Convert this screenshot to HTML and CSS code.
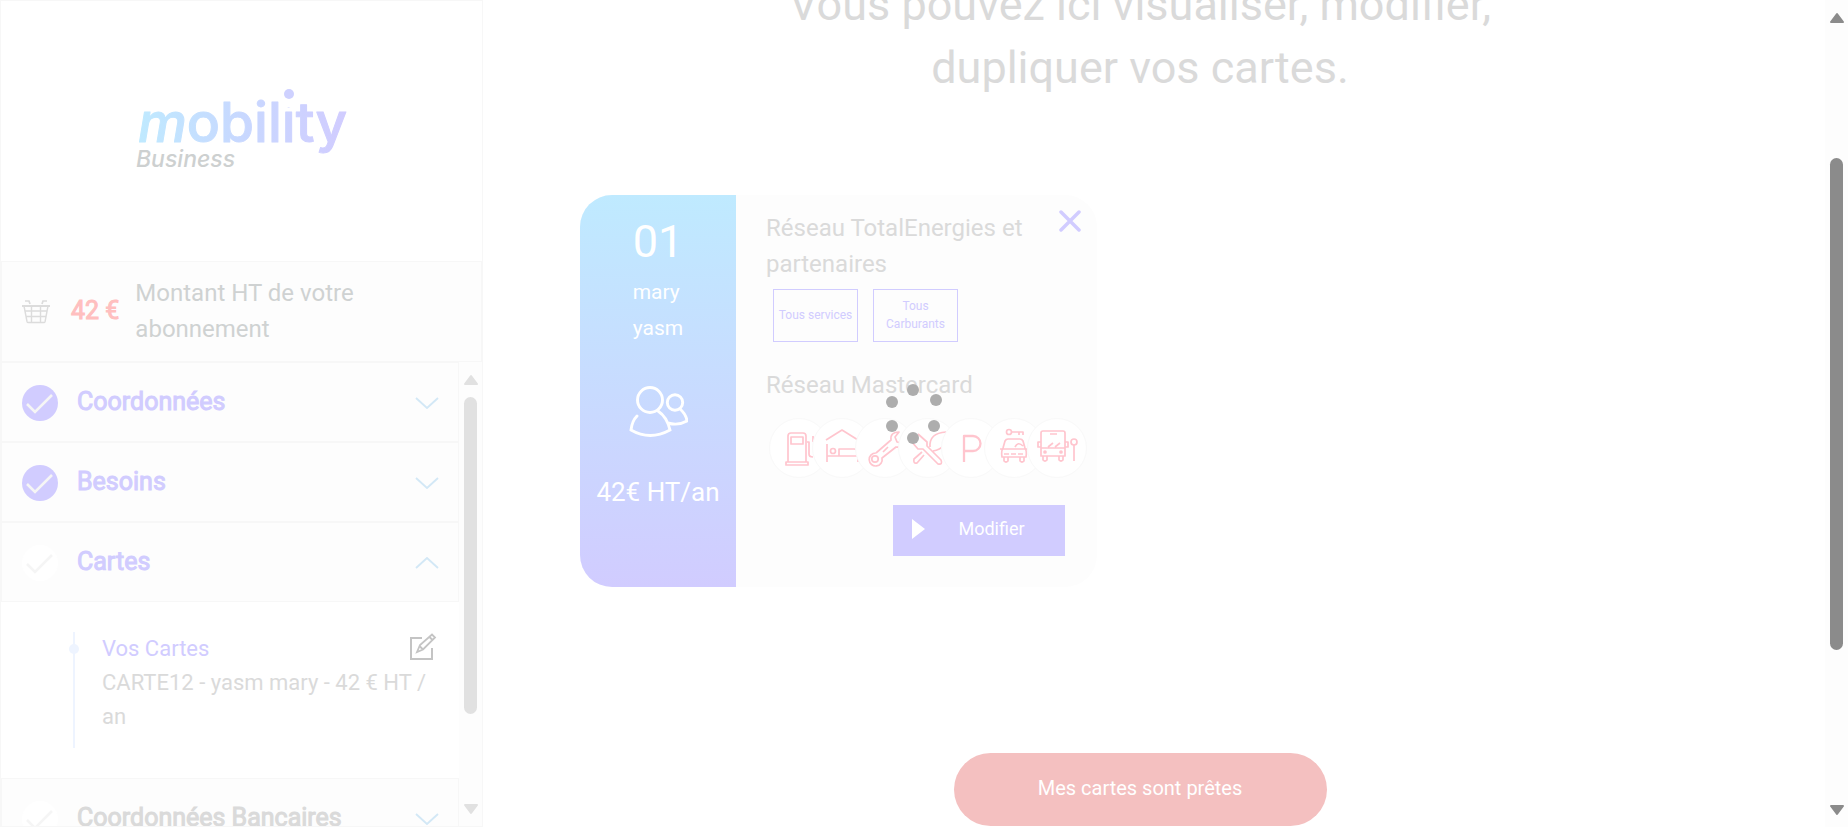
FILE: index.html
```html
<!DOCTYPE html>
<html lang="fr">
<head>
<meta charset="utf-8">
<title>Mobility Business</title>
<link rel="stylesheet" href="styles.css">
</head>
<body>
<svg class="defs" aria-hidden="true">
  <defs>
    <symbol id="check" viewBox="0 0 36 36"><path d="M5 19l8 8L30 10" fill="none" stroke="#f5f5f5" stroke-width="2.6"/></symbol>
    <symbol id="chevron" viewBox="0 0 24 12"><path d="M1 1l11 10L23 1" fill="none" stroke="#d3e8f6" stroke-width="1.9"/></symbol>
    <symbol id="arrow" viewBox="0 0 16 12"><path d="M8 2L14 10H2z" fill="currentColor" stroke="currentColor" stroke-width="2" stroke-linejoin="round"/></symbol>
  </defs>
</svg>
<div class="app">
  <aside class="sidebar">
    <div class="brand">
      <svg class="logo" viewBox="0 0 212 84" role="img" aria-label="mobility Business">
        <defs><linearGradient id="lg" gradientUnits="userSpaceOnUse" x1="0" y1="50" x2="212" y2="50"><stop offset="0" stop-color="#bfeaff"/><stop offset=".5" stop-color="#c8d8ff"/><stop offset="1" stop-color="#d1ccff"/></linearGradient></defs>
        <text class="logo-word" x="2" y="53"><tspan class="slant">m</tspan>obility</text>
        <rect x="147" y="5" width="10" height="13" fill="#fff"/>
        <circle cx="153" cy="5" r="5" fill="#ced1ff"/>
        <text class="logo-sub" x="0" y="78">Business</text>
      </svg>
    </div>
    <div class="summary">
      <svg class="basket" viewBox="0 0 28 26" fill="none" stroke="#dcdcdc"><path d="M3 3h4l1 3M25 3h-4l-1 3" stroke-width="1.7"/><path d="M0 8h28" stroke-width="2"/><path d="M2 8l3 15.500q.3 1 1.300 1h15.500q1 0 1.300-1L26 8M9.500 8v16M18.500 8v16M3 13h22M4 18.500h20" stroke-width="1.4"/></svg>
      <strong class="price">42 €</strong>
      <span class="summary-label">Montant HT de votre abonnement</span>
    </div>
    <div class="steps-area">
      <nav class="steps">
        <button class="step"><svg class="tick done"><use href="#check"/></svg><span class="step-name">Coordonnées</span><svg class="chev"><use href="#chevron"/></svg></button>
        <button class="step"><svg class="tick done"><use href="#check"/></svg><span class="step-name">Besoins</span><svg class="chev"><use href="#chevron"/></svg></button>
        <button class="step" aria-expanded="true"><svg class="tick"><use href="#check"/></svg><span class="step-name">Cartes</span><svg class="chev up"><use href="#chevron"/></svg></button>
        <div class="detail">
          <div class="timeline"></div>
          <div class="detail-text"><a class="detail-link" href="#cartes">Vos Cartes</a><p class="detail-line">CARTE12 - yasm mary - 42 € HT / an</p></div>
          <button class="edit" aria-label="Modifier vos cartes"><svg viewBox="0 0 28 28" fill="none" stroke="#c4c4c4" stroke-width="2"><path d="M13 5H2v21h21V15"/><path d="M8 19l3-7L23 1.500l3 3L14 16.500zM10.500 13l3 3M20.500 4l3 3" stroke-width="1.8"/></svg></button>
        </div>
        <button class="step"><svg class="tick"><use href="#check"/></svg><span class="step-name todo">Coordonnées Bancaires</span><svg class="chev"><use href="#chevron"/></svg></button>
      </nav>
      <div class="scroll inner"><svg class="arrow"><use href="#arrow"/></svg><div class="track"><div class="thumb"></div></div><svg class="arrow down"><use href="#arrow"/></svg></div>
    </div>
  </aside>
  <main class="main">
    <h1 class="title">Vous pouvez ici visualiser, modifier,<br>dupliquer vos cartes.</h1>
    <article class="card" id="cartes">
      <div class="card-side">
        <div class="who"><div class="num">01</div><div>mary</div><div>yasm</div></div>
        <svg class="people" viewBox="0 0 60 52" fill="none" stroke="#fff" stroke-width="2.900" stroke-linecap="round"><circle cx="22" cy="14" r="12.500"/><circle cx="47" cy="16.500" r="7.700"/><path d="M9 30Q4 35 3 44Q22 55 42 44Q39 31 30 25M52 23Q58 28 59 35Q50 40 40 37"/></svg>
        <div class="cost">42€ HT/an</div>
      </div>
      <div class="card-body">
        <button class="close" aria-label="Supprimer"><svg viewBox="0 0 22 22"><path d="M2 2l18 18M20 2L2 20" stroke="#d1ccff" stroke-width="3.500" stroke-linecap="round"/></svg></button>
        <h2 class="net">Réseau TotalEnergies et partenaires</h2>
        <div class="tags"><span class="tag">Tous services</span><span class="tag">Tous Carburants</span></div>
        <h2 class="net">Réseau Mastercard</h2>
        <div class="services">
          <span class="svc"><svg viewBox="0 0 58 58"><path d="M18 43V17q0-3 3-3h12q3 0 3 3v26M16 43h22v3H16zM21 18h12v7H21zM37 23h2v12q0 3 4 3M43 17v6"/></svg></span>
          <span class="svc"><svg viewBox="0 0 58 58"><path d="M13 21l16-10 16 10M14 25v18M14 37h31v6M26 37v-7h15q4 0 4 4"/><circle cx="20" cy="32" r="2.500"/></svg></span>
          <span class="svc"><svg viewBox="0 0 58 58"><circle cx="19" cy="40" r="3.200"/><path d="M20 34L35 21Q34 13 43 13L39 18L41 23L46 24L49 20Q48 29 40 28L26 39A6.500 6.500 0 1 1 20 34M27 33l5-5"/></svg></span>
          <span class="svc"><svg viewBox="0 0 58 58"><path d="M19 15l9 8v4l14 14q2 5-3 4L24 30h-5l-7-8M25 36l-7 8q-4 1-3-4l8-7M31 28q-1-14 16-15M34 32q7-1 11-6"/></svg></span>
          <span class="svc"><svg viewBox="0 0 58 58"><path d="M22 43V17h9a7.500 7.500 0 0 1 0 15h-9" stroke-width="2.300"/></svg></span>
          <span class="svc"><svg viewBox="0 0 58 58"><circle cx="24" cy="13" r="2.500"/><path d="M27 13h11v3M34 13v3M18 29l2-7q1-2 3-2h12q2 0 3 2l2 7q2 3 1 9H17q-1-6 1-9zM15 30h27M19 35h5M33 35h5M26 35h5M19 38v4q2 2 4 0v-4M35 38v4q2 2 4 0v-4M30 28q3-6 8-1"/></svg></span>
          <span class="svc"><svg viewBox="0 0 58 58"><path d="M15 12h20q2 0 2 2v23H13V14q0-2 2-2zM13 29h24M22 15h7M15 37v4q2 2 4 0v-4M31 37v4q2 2 4 0v-4M13 23h-3v5h3M37 23h3v5h-3M20 28l5-4M27 28l5-4M46 26v16"/><circle cx="46" cy="23" r="3"/><circle cx="17" cy="33" r="1"/><circle cx="33" cy="33" r="1"/></svg></span>
        </div>
        <button class="modify"><svg class="play" viewBox="0 0 13 20"><path d="M0 0l13 10L0 20z" fill="#fff"/></svg><span class="modify-label">Modifier</span></button>
      </div>
    </article>
    <button class="ready">Mes cartes sont prêtes</button>
  </main>
  <div class="scroll outer"><svg class="arrow"><use href="#arrow"/></svg><div class="track"><div class="thumb"></div></div><svg class="arrow down"><use href="#arrow"/></svg></div>
</div>
<svg class="spinner" viewBox="0 0 60 60" role="status" aria-label="Chargement" fill="#adadad"><circle cx="9" cy="18" r="6"/><circle cx="30" cy="6" r="6"/><circle cx="53" cy="16" r="6"/><circle cx="9" cy="42" r="6"/><circle cx="51" cy="42" r="6"/><circle cx="30" cy="54" r="6"/></svg>
</body>
</html>
```
FILE: styles.css
```css
* { box-sizing: border-box; }
body { margin: 0; font-family: Roboto, "Liberation Sans", sans-serif; font-size: 24px; line-height: 36px; color: #dadada; background: #fff; overflow: hidden; }
button { font: inherit; color: inherit; border: 0; padding: 0; background: none; }
h1, h2, p { margin: 0; font-weight: 400; }
svg { flex: none; display: block; }
.defs { position: absolute; width: 0; height: 0; }
.app { display: flex; height: 100vh; }

.sidebar { width: 483px; flex: none; display: flex; flex-direction: column; border: 1px solid #f7f7f7; }
.brand { height: 260px; flex: none; display: grid; place-items: center; }
.logo { width: 212px; height: 84px; overflow: visible; }
.logo-word { font: 500 55px Inter, sans-serif; fill: url(#lg); stroke: url(#lg); stroke-width: 1px; stroke-linejoin: round; }
.slant { font-style: italic; }
.logo-sub { font: italic 500 23px Inter, sans-serif; fill: #cdd0d0; }
.summary { display: flex; align-items: center; flex: none; height: 101px; padding: 0 20px 2px; border: 1px solid #f7f7f7; background: #fdfdfd; color: #cfd2d2; }
.basket { width: 28px; height: 26px; margin-right: 21px; }
.price { font-size: 25px; font-weight: 400; -webkit-text-stroke: 1px; color: #ffbfbf; margin-right: 16px; white-space: nowrap; }
.steps-area { flex: 1; min-height: 0; display: flex; }
.steps { flex: 1; min-width: 0; overflow: hidden; }
.step { width: 100%; height: 80px; display: flex; align-items: center; padding: 2px 19px 0 20px; border: 1px solid #f7f7f7; background: #fdfdfd; text-align: left; }
.tick { width: 36px; height: 36px; border-radius: 50%; background: #fff; margin-right: 19px; }
.done { background: #d1ccff; }
.step-name { flex: 1; padding-bottom: 2px; font-size: 25px; color: #d1ccff; -webkit-text-stroke: 1px; }
.todo { color: #dadada; }
.chev { width: 24px; height: 12px; }
.up { transform: rotate(180deg); }
.detail { display: flex; height: 176px; padding: 30px 22px 30px 72px; font-size: 22px; line-height: 34px; }
.timeline { width: 2px; background: #eef4ff; position: relative; }
.timeline::after { content: ""; position: absolute; left: -4px; top: 12px; width: 10px; height: 10px; border-radius: 50%; background: #eef4ff; }
.detail-text { flex: 1; margin-left: 27px; }
.detail-link { color: #d1ccff; text-decoration: none; }
.edit { width: 28px; height: 28px; margin-left: -28px; margin-top: 1px; }

.scroll { width: 23px; flex: none; background: #fdfdfd; display: flex; flex-direction: column; align-items: center; padding: 12px 0 11px; color: #e1e1e1; }
.arrow { width: 16px; height: 12px; }
.down { transform: rotate(180deg); }
.track { flex: 1; padding: 11px 0 89px; }
.thumb { width: 13px; height: 100%; border-radius: 7px; background: currentColor; }
.outer { color: #8b8b8b; }
.outer .track { padding: 134px 0 154px; }

.main { flex: 1; min-width: 0; padding: 0 125px 0 97px; display: flex; flex-direction: column; overflow: hidden; }
.title { font-size: 45px; line-height: 63px; text-align: center; margin-top: -27px; }
.card { display: flex; align-self: flex-start; width: 517px; margin-top: 96px; border-radius: 32px; overflow: hidden; background: #fdfdfd; flex: none; }
.card-side { width: 156px; flex: none; display: flex; flex-direction: column; align-items: center; padding: 20px 0 72px; color: #fff; background: linear-gradient(#bfeaff, #d1ccff); }
.who { font-size: 21px; line-height: 36px; }
.num { font-size: 45px; line-height: 54px; margin-bottom: 5px; }
.people { width: 60px; height: 52px; margin: 40px 0 36px; }
.cost { font-size: 26px; white-space: nowrap; }
.card-body { flex: 1; min-width: 0; position: relative; padding: 15px 32px 31px 30px; display: flex; flex-direction: column; }
.net { font-size: 24px; line-height: 36px; }
.close { position: absolute; right: 16px; top: 15px; width: 22px; height: 22px; }
.tags { display: flex; gap: 15px; margin: 7px 0 25px 7px; }
.tag { width: 85px; height: 53px; padding-bottom: 2px; border: 1px solid #d1ccff; color: #d1ccff; font-size: 12px; line-height: 18px; text-align: center; display: grid; place-items: center; }
.services { display: flex; margin: 15px 0 27px 3px; }
.svc { flex: none; width: 60px; height: 60px; margin-right: -17px; border: 1px solid #f9f9f9; border-radius: 50%; background: #fff; overflow: hidden; }
.svc svg { width: 58px; height: 58px; fill: none; stroke: #ffc5ce; stroke-width: 1.700; stroke-linejoin: round; }
.modify { align-self: flex-end; display: flex; align-items: center; width: 172px; height: 51px; padding: 0 19px 3px; background: #d1ccff; color: #fff; font-size: 18px; }
.play { width: 13px; height: 20px; }
.modify-label { flex: 1; text-align: center; margin-left: 12px; }
.ready { align-self: center; flex: none; width: 373px; height: 73px; margin-top: 166px; padding-bottom: 3px; border-radius: 37px; background: #f4c0c0; color: #fff; font-size: 20px; }
.spinner { position: absolute; left: 883px; top: 384px; width: 60px; height: 60px; }
```
